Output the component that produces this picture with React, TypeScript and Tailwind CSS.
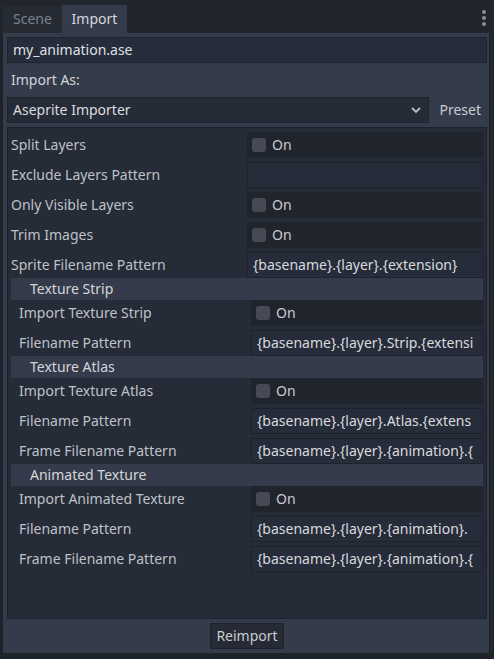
import React from 'react';

type Row =
  | { kind: 'check'; label: string }
  | { kind: 'text'; label: string; value: string };

type Section = { title: string; rows: Row[] };

const topRows: Row[] = [
  { kind: 'check', label: 'Split Layers' },
  { kind: 'text', label: 'Exclude Layers Pattern', value: '' },
  { kind: 'check', label: 'Only Visible Layers' },
  { kind: 'check', label: 'Trim Images' },
  { kind: 'text', label: 'Sprite Filename Pattern', value: '{basename}.{layer}.{extension}' },
];

// values are shown as the editor clips them (whole glyphs only)
const sections: Section[] = [
  {
    title: 'Texture Strip',
    rows: [
      { kind: 'check', label: 'Import Texture Strip' },
      { kind: 'text', label: 'Filename Pattern', value: '{basename}.{layer}.Strip.{extensi' },
    ],
  },
  {
    title: 'Texture Atlas',
    rows: [
      { kind: 'check', label: 'Import Texture Atlas' },
      { kind: 'text', label: 'Filename Pattern', value: '{basename}.{layer}.Atlas.{extens' },
      { kind: 'text', label: 'Frame Filename Pattern', value: '{basename}.{layer}.{animation}.{' },
    ],
  },
  {
    title: 'Animated Texture',
    rows: [
      { kind: 'check', label: 'Import Animated Texture' },
      { kind: 'text', label: 'Filename Pattern', value: '{basename}.{layer}.{animation}.' },
      { kind: 'text', label: 'Frame Filename Pattern', value: '{basename}.{layer}.{animation}.{' },
    ],
  },
];

const PropRow = ({ row, sub }: { row: Row; sub?: boolean }) => (
  <div className={`flex h-[26px] items-center pr-[3px] ${sub ? 'pl-[11px]' : 'pl-[3px]'}`}>
    <div className="flex-1 basis-0 whitespace-nowrap pb-[2px] text-[#bec1c7]">{row.label}</div>
    <div className="flex-1 basis-0 h-full min-w-0">
      {row.kind === 'check' ? (
        <div className="flex h-full items-center gap-[6px] bg-[#20242d] pl-[5px]">
          <span className="w-[14px] h-[14px] rounded-[3px] bg-[#454a55]" />
          <span className="pb-[2px] text-[#c9cbd0]">On</span>
        </div>
      ) : (
        <div className="flex h-full items-center border border-[#1e222a] bg-[#272c3a] px-[5px]">
          <div className="whitespace-nowrap pb-[2px] text-[#d8dade]">{row.value}</div>
        </div>
      )}
    </div>
  </div>
);

export default function App() {
  return (
    <div
      className="w-[494px] h-[659px] bg-[#1e2229] flex flex-col text-[14px]"
      style={{ fontFamily: '"Noto Sans", "Open Sans", sans-serif' }}
    >
      {/* tab bar */}
      <div className="h-[33px] flex items-end bg-[#21252d] pl-[3px] relative">
        <div className="h-[27px] w-[59px] bg-[#262a33] flex items-center justify-center pb-[2px] text-[#7b808a]">Scene</div>
        <div className="h-[28px] w-[65px] bg-[#343b4b] flex items-center justify-center pb-[2px] text-[#d6d8dc]">Import</div>
        <div className="absolute right-[8px] top-[10px] flex flex-col gap-[2px]">
          <span className="w-[4px] h-[4px] rounded-full bg-[#8a8f99]" />
          <span className="w-[4px] h-[4px] rounded-full bg-[#8a8f99]" />
          <span className="w-[4px] h-[4px] rounded-full bg-[#8a8f99]" />
        </div>
      </div>

      <div className="flex h-[620px]">
        <div className="w-[3px]" />
        {/* dock panel */}
        <div className="w-[486px] bg-[#343b4b] flex flex-col gap-1 pl-[4px] pr-[2px] py-[4px]">
          <div className="h-[26px] shrink-0 flex items-center border border-[#1f232b] bg-[#272c3a] px-[5px] pb-[1px] text-[#dfe0e3]">
            my_animation.ase
          </div>
          <div className="h-[26px] shrink-0 flex items-center pl-[4px] pb-[2px] text-[#d2d4d8]">Import As:</div>
          <div className="h-[26px] shrink-0 flex items-center gap-[10px]">
            <div className="flex-1 h-full flex items-center justify-between border border-[#1f232b] bg-[#262b38] pl-[5px] pr-[6px] text-[#dadcdf]">
              <span className="pb-[1px]">Aseprite Importer</span>
              <svg width="12" height="8" viewBox="0 0 12 8">
                <path d="M2 2 L6 6 L10 2" fill="none" stroke="#b8bbc1" strokeWidth="1.8" />
              </svg>
            </div>
            <span className="pr-[6px] pb-[1px] text-[#c9ccd1]">Preset</span>
          </div>

          {/* inspector */}
          <div className="h-[492px] shrink-0 border border-[#1e222a] bg-[#262b38] pt-[4px] flex flex-col">
            <div className="flex flex-col gap-1">
              {topRows.map((r) => (
                <PropRow key={r.label} row={r} />
              ))}
            </div>
            {sections.map((s) => (
              <div key={s.title} className="flex flex-col">
                <div className="h-[22px] mx-[3px] bg-[#353b4a] flex items-center pl-[19px] pb-[1px] text-[#d3d5d9]">
                  {s.title}
                </div>
                <div className="flex flex-col gap-1">
                  {s.rows.map((r) => (
                    <PropRow key={s.title + r.label} row={r} sub />
                  ))}
                </div>
              </div>
            ))}
          </div>

          <div className="h-[26px] shrink-0 flex justify-center">
            <button className="h-full px-[5px] pb-[1px] border border-[#1f232b] bg-[#252a36] text-[#c9ccd1]">
              Reimport
            </button>
          </div>
        </div>
        <div className="w-[2px]" />
        <div className="w-[1px] bg-[#2c313b]" />
        <div className="w-[2px]" />
      </div>
    </div>
  );
}
